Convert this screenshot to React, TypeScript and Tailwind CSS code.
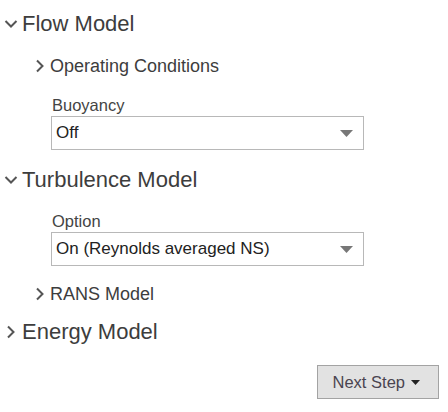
import React from 'react';

const ChevronDown = () => (
  <svg width="14" height="10" viewBox="0 0 14 10" className="shrink-0">
    <path d="M1.5 2 L7 7.5 L12.5 2" fill="none" stroke="#555" strokeWidth="2" />
  </svg>
);

const ChevronRight = () => (
  <svg width="10" height="14" viewBox="0 0 10 14" className="shrink-0">
    <path d="M2 1.5 L7.5 7 L2 12.5" fill="none" stroke="#555" strokeWidth="2" />
  </svg>
);

function SelectBox({ value }: { value: string }) {
  return (
    <div className="flex items-center justify-between h-[34px] w-[313px] border border-[#b8b8b8] bg-white pl-[4px] pr-[10px]">
      <span className="text-[17px] text-[#222]">{value}</span>
      <svg width="13" height="7" viewBox="0 0 13 7">
        <path d="M0 0 H13 L6.5 7 Z" fill="#777" />
      </svg>
    </div>
  );
}

function Field({ label, value }: { label: string; value: string }) {
  return (
    <div className="ml-[51px] flex flex-col">
      <span className="text-[16.5px] leading-[20px] text-[#444] pl-[1px]">{label}</span>
      <div className="mt-[1px]">
        <SelectBox value={value} />
      </div>
    </div>
  );
}

export default function App() {
  return (
    <div
      className="w-[448px] h-[412px] bg-white flex flex-col text-[#3d3d3d]"
      style={{ fontFamily: '"Liberation Sans", Arial, sans-serif' }}
    >
      {/* Flow Model */}
      <div className="flex items-center mt-[11px] ml-[4px] h-[26px] gap-[4px]">
        <ChevronDown />
        <span className="text-[22px] leading-[26px]">Flow Model</span>
      </div>

      <div className="flex items-center mt-[17px] ml-[35px] h-[24px] gap-[5px]">
        <ChevronRight />
        <span className="text-[18px] leading-[24px]">Operating Conditions</span>
      </div>

      <div className="mt-[17px]">
        <Field label="Buoyancy" value="Off" />
      </div>

      {/* Turbulence Model */}
      <div className="flex items-center mt-[17px] ml-[4px] h-[26px] gap-[4px]">
        <ChevronDown />
        <span className="text-[22px] leading-[26px]">Turbulence Model</span>
      </div>

      <div className="mt-[18px]">
        <Field label="Option" value="On (Reynolds averaged NS)" />
      </div>

      <div className="flex items-center mt-[16px] ml-[35px] h-[24px] gap-[5px]">
        <ChevronRight />
        <span className="text-[18px] leading-[24px]">RANS Model</span>
      </div>

      {/* Energy Model */}
      <div className="flex items-center mt-[13px] ml-[6px] h-[26px] gap-[6px]">
        <ChevronRight />
        <span className="text-[22px] leading-[26px]">Energy Model</span>
      </div>

      <div className="flex justify-end mt-[20px] pr-[9px]">
        <button className="flex items-center h-[34px] border border-[#a3a3a3] bg-[#e2e2e2] pl-[15px] pr-[18px] gap-[6px] text-[16.5px] text-[#4a4450]">
          Next Step
          <svg width="9" height="5" viewBox="0 0 9 5">
            <path d="M0 0 H9 L4.5 5 Z" fill="#222" />
          </svg>
        </button>
      </div>
    </div>
  );
}
